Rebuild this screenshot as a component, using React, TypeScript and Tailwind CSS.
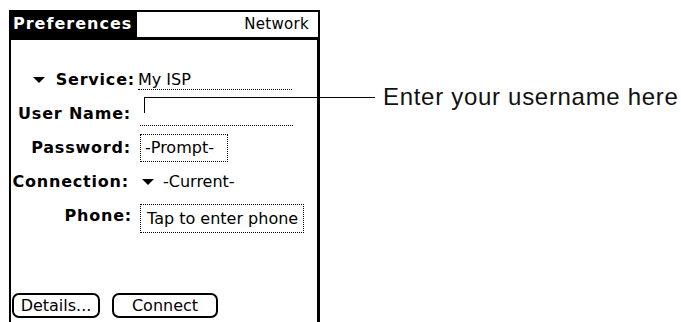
import React from 'react';

function Caret() {
  return (
    <svg width="12" height="6" viewBox="0 0 12 6" className="shrink-0">
      <path d="M0 0 H12 L6 6 Z" fill="#000" />
    </svg>
  );
}

export default function App() {
  const palm = { fontFamily: '"DejaVu Sans", Verdana, sans-serif' };

  return (
    <div className="relative w-[681px] h-[322px] bg-white overflow-hidden text-black" style={palm}>
      <div className="ml-[9px] pt-[10px] w-[311px] h-[322px] flex flex-col">
        {/* title bar */}
        <div className="flex h-[30px] border-b-[3px] border-black">
          <div className="w-[128px] bg-black text-white font-bold text-[16px] tracking-[1px] leading-none pl-[4px] flex items-center">
            Preferences
          </div>
          <div className="flex-1 border-t-2 border-r-2 border-black flex items-center justify-end pr-[9px] text-[15px] tracking-[0.3px]">
            Network
          </div>
        </div>

        {/* body */}
        <div className="flex-1 border-l-2 border-r-[3px] border-black pt-[23px] flex flex-col text-[16px]">
          <div className="flex items-center h-[34px]">
            <div className="w-[124px] flex items-center justify-end gap-[11px] font-bold tracking-[0.8px]">
              <Caret />
              <span>Service:</span>
            </div>
            <div className="ml-[3px] w-[154px] h-[19px] border-b border-dotted border-black leading-[17px]">
              My ISP
            </div>
          </div>

          <div className="flex items-center h-[34px]">
            <div className="w-[120px] text-right font-bold tracking-[0.8px]">User Name:</div>
            <div className="ml-[9px] w-[153px] h-[16px] mt-[7px] border-b border-dotted border-black" />
          </div>

          <div className="flex items-center h-[34px]">
            <div className="w-[120px] text-right font-bold tracking-[0.8px]">Password:</div>
            <div className="ml-[9px] w-[88px] h-[28px] border border-dotted border-black flex items-center pl-[4px]">
              -Prompt-
            </div>
          </div>

          <div className="flex items-center h-[34px]">
            <div className="w-[118px] text-right font-bold tracking-[0.8px]">Connection:</div>
            <div className="ml-[13px] flex items-center gap-[9px]">
              <Caret />
              <span>-Current-</span>
            </div>
          </div>

          <div className="flex items-center h-[34px]">
            <div className="w-[121px] text-right font-bold tracking-[0.8px]">Phone:</div>
            <div className="ml-[8px] mt-[5px] w-[164px] h-[29px] border border-dotted border-black flex items-center pl-[6px] whitespace-nowrap">
              Tap to enter phone
            </div>
          </div>

          <div className="mt-[60px] ml-px flex gap-[12px]">
            <button className="w-[88px] h-[25px] border-2 border-black rounded-[7px] leading-none">
              Details...
            </button>
            <button className="w-[106px] h-[25px] border-2 border-black rounded-[7px] leading-none">
              Connect
            </button>
          </div>
        </div>
      </div>

      {/* callout */}
      <div className="absolute left-[144px] top-[97px] w-[231px] h-px bg-black" />
      <div className="absolute left-[144px] top-[97px] w-px h-[16px] bg-black" />
      <div
        className="absolute left-[383px] top-[83px] text-[24px] tracking-[0.7px] leading-[28px] text-[#111] whitespace-nowrap"
        style={{ fontFamily: '"Liberation Sans", Arial, sans-serif' }}
      >
        Enter your username here
      </div>
    </div>
  );
}
